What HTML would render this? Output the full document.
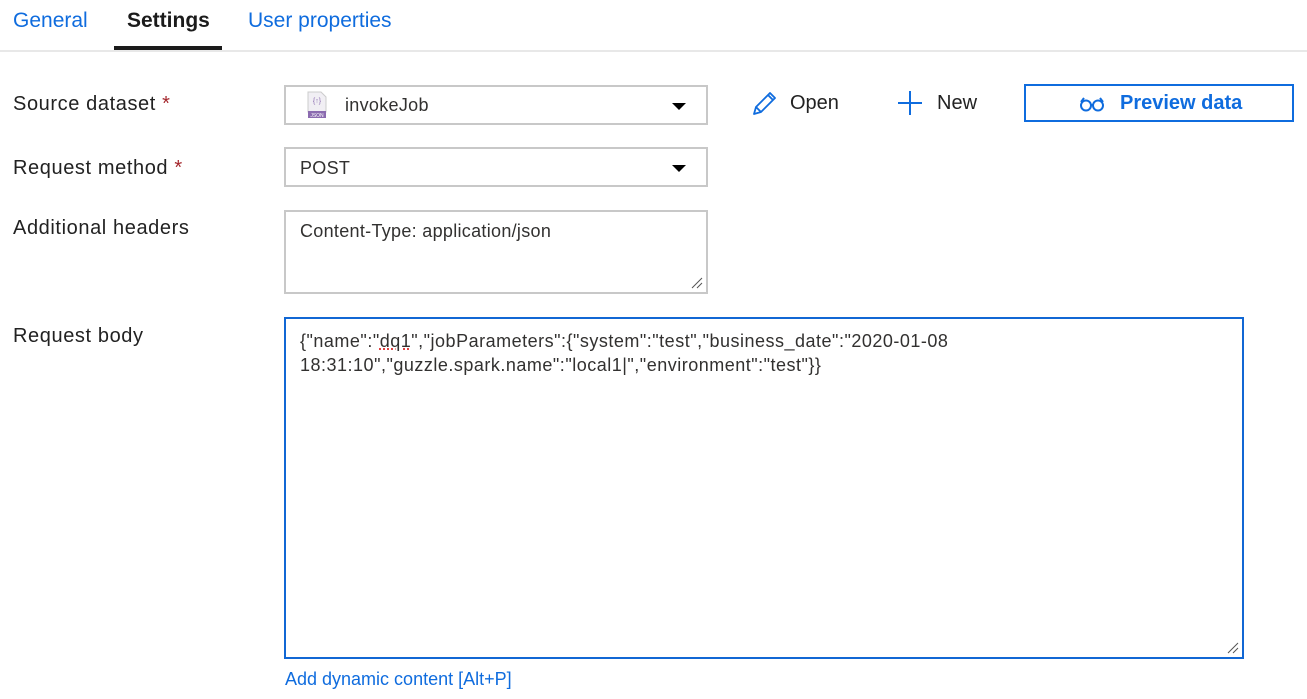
<!DOCTYPE html>
<html><head><style>
body{margin:0;width:1307px;height:699px;background:#fff;font-family:"Liberation Sans",sans-serif;color:#222;position:relative;overflow:hidden}
.a{position:absolute;white-space:nowrap}
.tab{font-size:21px;top:9px}
.lbl{font-size:20px;left:13px;color:#222;letter-spacing:0.6px}
.req{color:#a4262c}
.box{position:absolute;border:2px solid #c8c8c8;box-sizing:border-box;background:#fff}
.ft{font-size:18px;color:#323130;letter-spacing:0.3px}
.caret{position:absolute;right:20px;width:0;height:0;border-left:7px solid transparent;border-right:7px solid transparent;border-top:7px solid #000}
</style></head><body>
<div class="a tab" style="left:13px;color:#0f6cde">General</div>
<div class="a tab" style="left:127px;color:#1b1b1b;font-weight:bold">Settings</div>
<div class="a tab" style="left:248px;color:#0f6cde">User properties</div>
<div class="a" style="left:0;top:50px;width:1307px;height:2px;background:#e8e8e8"></div>
<div class="a" style="left:114px;top:46px;width:108px;height:4px;background:#1b1b1b"></div>

<div class="a lbl" style="top:93px">Source dataset <span class="req">*</span></div>
<div class="a lbl" style="top:157px">Request method <span class="req">*</span></div>
<div class="a lbl" style="top:217px">Additional headers</div>
<div class="a lbl" style="top:325px">Request body</div>

<div class="box" style="left:284px;top:85px;width:424px;height:40px">
 <svg class="a" style="left:21px;top:4px" width="20" height="28" viewBox="0 0 20 28"><path d="M1 1h13l5 5v15H1z" fill="#f1eff4" stroke="#ccc"/><text x="10" y="12" font-size="7" text-anchor="middle" fill="#8b6bb0" font-family="Liberation Sans">{↑}</text><rect x="1" y="20" width="18" height="7" fill="#8b6bb0"/><text x="10" y="26" font-size="5" text-anchor="middle" fill="#fff" font-family="Liberation Sans">JSON</text></svg>
 <div class="a ft" style="left:59px;top:8px">invokeJob</div>
 <div class="caret" style="top:16px"></div>
</div>
<div class="box" style="left:284px;top:147px;width:424px;height:40px">
 <div class="a ft" style="left:14px;top:9px">POST</div>
 <div class="caret" style="top:16px"></div>
</div>
<div class="box" style="left:284px;top:210px;width:424px;height:84px">
 <div class="a ft" style="left:14px;top:9px">Content-Type: application/json</div>
 <svg class="a" style="right:3px;bottom:3px" width="12" height="12"><path d="M11 1L1 11M11 6L6 11" stroke="#555" stroke-width="1"/></svg>
</div>
<div class="box" style="left:284px;top:317px;width:960px;height:342px;border-color:#1167d4">
 <div class="a ft" style="left:14px;top:10px;line-height:24px;letter-spacing:0.5px">{"name":"<span style="text-decoration:underline dotted #e04343;text-decoration-thickness:2px">dq1</span>","jobParameters":{"system":"test","business_date":"2020-01-08<br>18:31:10","guzzle.spark.name":"local1|","environment":"test"}}</div>
 <svg class="a" style="right:3px;bottom:3px" width="12" height="12"><path d="M11 1L1 11M11 6L6 11" stroke="#555" stroke-width="1"/></svg>
</div>
<div class="a" style="left:285px;top:669px;font-size:18px;color:#0f6cde">Add dynamic content [Alt+P]</div>

<svg class="a" style="left:751px;top:90px" width="27" height="27" viewBox="0 0 27 27"><path d="M3 24l2-7L19 3l5 5L10 22z M17 5l5 5 M5 17l5 5" fill="none" stroke="#0f6cde" stroke-width="1.8" stroke-linejoin="round"/></svg>
<div class="a" style="left:790px;top:92px;font-size:20px;color:#222">Open</div>
<svg class="a" style="left:897px;top:90px" width="26" height="26"><path d="M13 1v24M1 13h24" stroke="#0f6cde" stroke-width="2"/></svg>
<div class="a" style="left:937px;top:92px;font-size:20px;color:#222">New</div>
<div class="a" style="left:1024px;top:84px;width:270px;height:38px;border:2px solid #0f6cde;box-sizing:border-box">
 <svg class="a" style="left:53px;top:10px" width="26" height="16" viewBox="0 0 26 16"><circle cx="7" cy="9.5" r="5" fill="none" stroke="#0f6cde" stroke-width="2"/><circle cx="19" cy="9.5" r="5" fill="none" stroke="#0f6cde" stroke-width="2"/><path d="M12 9h2M2 6l3-4M24 6l-3-4" stroke="#0f6cde" stroke-width="2" fill="none"/></svg>
 <div class="a" style="left:94px;top:6px;font-size:20px;font-weight:bold;color:#0f6cde">Preview data</div>
</div>
</body></html>
